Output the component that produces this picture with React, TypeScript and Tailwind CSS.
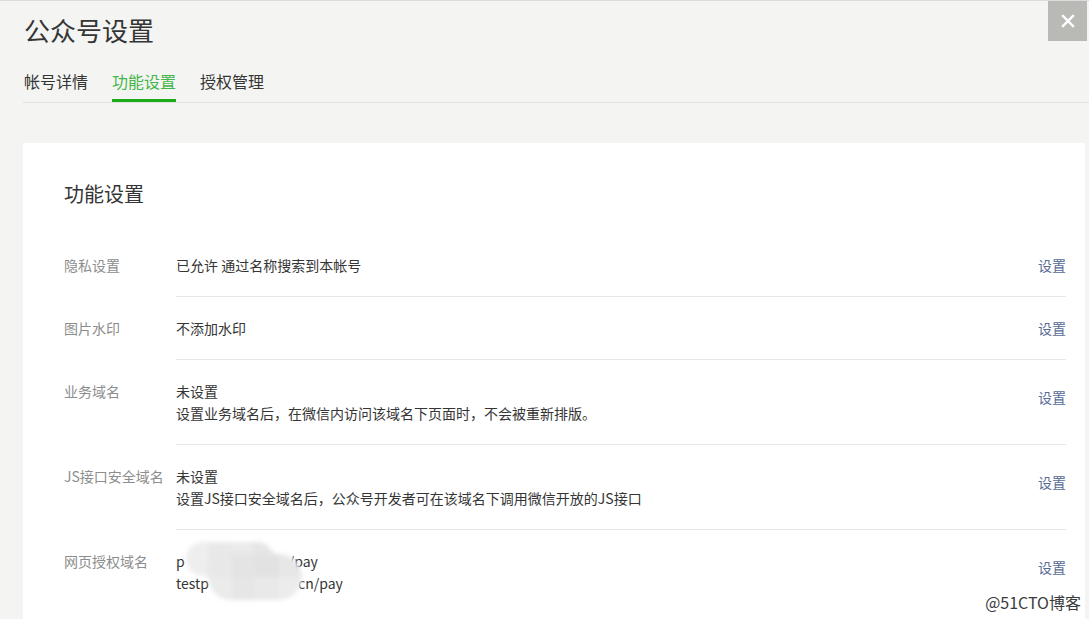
import React from "react";

type Row = {
  label: string;
  lines: React.ReactNode[];
  last?: boolean;
};

const font = {
  fontFamily:
    '"Noto Sans CJK SC", "Microsoft YaHei", "Liberation Sans", sans-serif',
};

function BlurredText({ head, gap, tail }: { head: string; gap: string; tail: string }) {
  return (
    <span>
      {head}
      <span className={`inline-block ${gap}`} />
      {tail}
    </span>
  );
}

const rows: Row[] = [
  { label: "隐私设置", lines: ["已允许 通过名称搜索到本帐号"] },
  { label: "图片水印", lines: ["不添加水印"] },
  {
    label: "业务域名",
    lines: ["未设置", "设置业务域名后，在微信内访问该域名下页面时，不会被重新排版。"],
  },
  {
    label: "JS接口安全域名",
    lines: ["未设置", "设置JS接口安全域名后，公众号开发者可在该域名下调用微信开放的JS接口"],
  },
  {
    label: "网页授权域名",
    lines: [
      <BlurredText key="a" head="p" gap="w-[104px]" tail="/pay" />,
      <BlurredText key="b" head="testp" gap="w-[89px]" tail="cn/pay" />,
    ],
    last: true,
  },
];

function Mosaic() {
  return (
    <>
      <div className="absolute left-[10px] top-[12px] h-[34px] w-[88px] overflow-hidden rounded-[18px] blur-[2px]">
        <div className="grid h-full grid-cols-4">
          <div className="bg-[#eeeeee]" />
          <div className="bg-[#e9e9e9]" />
          <div className="bg-[#ebebeb]" />
          <div className="bg-[#e6e6e6]" />
        </div>
      </div>
      <div className="absolute left-[32px] top-[24px] h-[46px] w-[94px] overflow-hidden rounded-[24px] blur-[2px]">
        <div className="grid h-full grid-cols-4 grid-rows-2">
          <div className="bg-[#e8e8e8]" />
          <div className="bg-[#e4e4e4]" />
          <div className="bg-[#e2e2e2]" />
          <div className="bg-[#e7e7e7]" />
          <div className="bg-[#ebebeb]" />
          <div className="bg-[#e6e6e6]" />
          <div className="bg-[#e9e9e9]" />
          <div className="bg-[#ececec]" />
        </div>
      </div>
    </>
  );
}

function SettingRow({ row }: { row: Row }) {
  const multi = row.lines.length > 1;
  return (
    <div className="flex">
      <div className="w-[112px] shrink-0 whitespace-nowrap pt-[20px] text-[14px] leading-[22px] text-[#8d8d8d]">
        {row.label}
      </div>
      <div
        className={`relative flex flex-1 items-start pt-[20px] pb-[20px] ${
          row.last ? "" : "border-b border-[#e7e7eb]"
        }`}
      >
        <div className="flex-1 text-[14px] leading-[22px] text-[#353535]">
          {row.lines.map((line, i) => (
            <div key={i}>{line}</div>
          ))}
        </div>
        <a
          className={`shrink-0 text-[14px] leading-[22px] text-[#576b95] ${
            multi ? "mt-[6px]" : ""
          }`}
        >
          设置
        </a>
        {row.last && <Mosaic />}
      </div>
    </div>
  );
}

export default function App() {
  return (
    <div
      className="relative h-[619px] w-[1089px] overflow-hidden border-t border-[#dcdcdc] bg-[#f4f5f2]"
      style={font}
    >
      <div className="absolute right-[2px] top-0 flex h-[40px] w-[39px] items-center justify-center bg-[#b9bab6]">
        <svg width="14" height="14" viewBox="0 0 14 14">
          <path
            d="M2 2 L12 12 M12 2 L2 12"
            stroke="#ffffff"
            strokeWidth="2.4"
            strokeLinecap="square"
          />
        </svg>
      </div>

      <div className="px-[24px] pt-[10px] text-[26px] leading-[38px] text-[#353535]">
        公众号设置
      </div>

      <div className="ml-[23px] mt-[21px] flex gap-[24px] border-b border-[#e2e3df] pl-[1px] text-[16px] leading-[22px]">
        <div className="pb-[10px] text-[#353535]">帐号详情</div>
        <div className="border-b-[3px] border-[#1aad19] pb-[7px] text-[#44b549]">
          功能设置
        </div>
        <div className="pb-[10px] text-[#353535]">授权管理</div>
      </div>

      <div className="ml-[23px] mr-[4px] mt-[40px] h-[500px] bg-white pl-[41px] pr-[19px]">
        <div className="pt-[37px] text-[20px] leading-[28px] text-[#353535]">
          功能设置
        </div>
        <div className="mt-[26px]">
          {rows.map((row) => (
            <SettingRow key={row.label} row={row} />
          ))}
        </div>
      </div>

      <div
        className="absolute bottom-[7px] right-[8px] text-[16px] leading-[20px] text-[#3a3a3a]"
        style={{ textShadow: "0 0 2px #fff, 0 0 2px #fff" }}
      >
        @51CTO博客
      </div>
    </div>
  );
}
